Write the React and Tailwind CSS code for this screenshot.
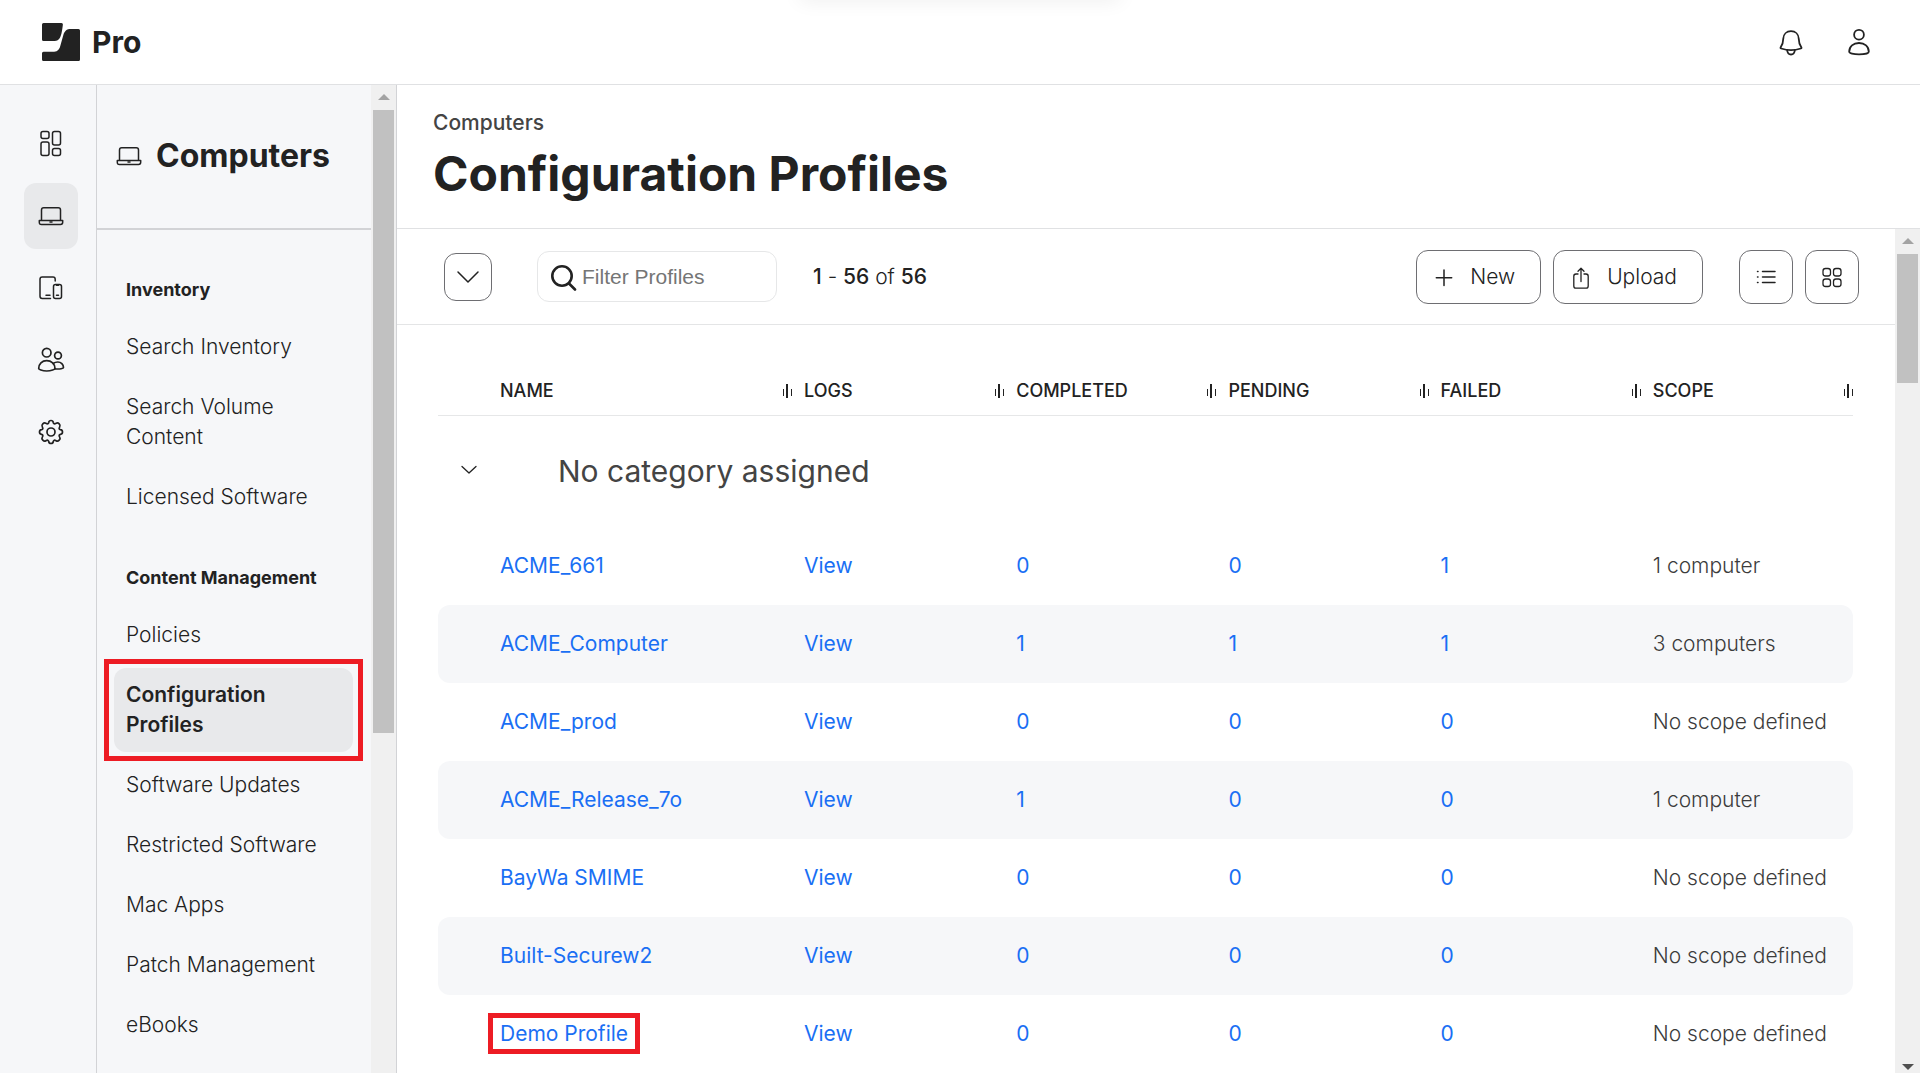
const navGroups = [
  {
    title: "Inventory",
    items: ["Search Inventory", "Search Volume Content", "Licensed Software"],
  },
  {
    title: "Content Management",
    items: [
      "Policies",
      "Configuration Profiles",
      "Software Updates",
      "Restricted Software",
      "Mac Apps",
      "Patch Management",
      "eBooks",
    ],
  },
];

const columns = ["Name", "Logs", "Completed", "Pending", "Failed", "Scope"];

const profiles = [
  { name: "ACME_661", completed: 0, pending: 0, failed: 1, scope: "1 computer" },
  { name: "ACME_Computer", completed: 1, pending: 1, failed: 1, scope: "3 computers" },
  { name: "ACME_prod", completed: 0, pending: 0, failed: 0, scope: "No scope defined" },
  { name: "ACME_Release_7o", completed: 1, pending: 0, failed: 0, scope: "1 computer" },
  { name: "BayWa SMIME", completed: 0, pending: 0, failed: 0, scope: "No scope defined" },
  { name: "Built-Securew2", completed: 0, pending: 0, failed: 0, scope: "No scope defined" },
  { name: "Demo Profile", completed: 0, pending: 0, failed: 0, scope: "No scope defined" },
];

const Icon = ({ size = 28, width = 1.5, children }) => (
  <svg
    width={size}
    height={size}
    viewBox={`0 0 ${size} ${size}`}
    fill="none"
    stroke="currentColor"
    strokeWidth={width}
    strokeLinecap="round"
    strokeLinejoin="round"
    className="shrink-0"
    aria-hidden="true"
  >
    {children}
  </svg>
);

const Logo = () => (
  <svg width="38" height="38" viewBox="0 0 38 38" fill="#222222" aria-hidden="true">
    <path d="M1.5 0H19.5Q21 0 20.9 1.5C20.3 6 19.9 10 18.6 13.2C17.2 16.7 15.5 18 11.5 18H1.5Q0 18 0 16.5V1.5Q0 0 1.5 0Z" />
    <path d="M29 6H36.5Q38 6 38 7.5V36.5Q38 38 36.5 38H1.5Q0 38 0 36.5V30.3Q0 28.8 1.5 28.8H10.5C15 28.8 17 27.3 18.2 23.2L21.2 12.5C22.6 7.8 24.5 6 29 6Z" />
  </svg>
);

const DashboardIcon = () => (
  <Icon>
    <rect x="4" y="1.5" width="8" height="7" rx="2" />
    <rect x="4" y="12" width="8" height="13.5" rx="2" />
    <rect x="15.5" y="1.5" width="8" height="13.5" rx="2" />
    <rect x="15.5" y="18.5" width="8" height="7" rx="2" />
  </Icon>
);

const LaptopIcon = () => (
  <Icon>
    <path d="M4.5 18V8Q4.5 5.8 6.7 5.8H21.3Q23.5 5.8 23.5 8V18" />
    <path d="M2.3 18.5H25.7V20.3Q25.7 22.5 23.5 22.5H4.5Q2.3 22.5 2.3 20.3Z" />
    <path d="M13 20H15" />
  </Icon>
);

const DevicesIcon = () => (
  <Icon>
    <path d="M13.5 24.5H5.2Q3 24.5 3 22.3V5.2Q3 3 5.2 3H16Q18.2 3 18.2 5.2V7" />
    <rect x="16.5" y="10.5" width="8" height="14" rx="2" />
    <path d="M9 21.2H13M19.5 21.2H21.5M19.5 11.2H21.5" />
  </Icon>
);

const PeopleIcon = () => (
  <Icon width={1.7}>
    <circle cx="9.7" cy="6.7" r="4.3" />
    <circle cx="21" cy="9.5" r="3.4" />
    <path d="M1.7 22.5C1.7 18 5 14.7 9.7 14.7S18 18 18 22.5C18 23.2 14.5 25 9.7 25S1.7 23.2 1.7 22.5Z" />
    <path d="M16.2 17.5C17.5 16.5 19 16 20.8 16C24 16 26.5 18.5 26.5 21.6C26.5 22.4 23 23.4 18 22.8" />
  </Icon>
);

// eight teeth round the hub
const GearIcon = () => (
  <Icon width={1.7}>
    <circle cx="14" cy="14" r="4" />
    <path d="M11.7 4.5Q12 2.5 14 2.5T16.3 4.5Q16.7 6.7 19.1 5.3Q20.7 4.3 22.2 5.8T22.7 8.9Q21.3 11.3 23.5 11.7Q25.5 12 25.5 14T23.5 16.3Q21.3 16.7 22.7 19.1Q23.7 20.7 22.2 22.2T19.1 22.7Q16.7 21.3 16.3 23.5Q16 25.5 14 25.5T11.7 23.5Q11.3 21.3 8.9 22.7Q7.3 23.7 5.8 22.2T5.3 19.1Q6.7 16.7 4.5 16.3Q2.5 16 2.5 14T4.5 11.7Q6.7 11.3 5.3 8.9Q4.3 7.3 5.8 5.8T8.9 5.3Q11.3 6.7 11.7 4.5Z" />
  </Icon>
);

const BellIcon = () => (
  <Icon width={1.8}>
    <path d="M14 3.2C9.5 3.2 6.5 6.3 6.3 10.5C6.2 14.5 5.8 16.2 3.7 19.3C3.3 20 3.5 20.3 4.2 20.5C10 22.4 18 22.4 23.8 20.5C24.5 20.3 24.7 20 24.3 19.3C22.2 16.2 21.8 14.5 21.7 10.5C21.5 6.3 18.5 3.2 14 3.2Z" />
    <path d="M10.2 22.2C10.4 25 11.8 26.5 14 26.5S17.6 25 17.8 22.2" />
  </Icon>
);

const UserIcon = () => (
  <Icon width={1.8}>
    <circle cx="14" cy="6.7" r="4.9" />
    <path d="M4.2 23.7C4.2 18.5 8.3 15 14 15S23.8 18.5 23.8 23.7C23.8 25.2 19.5 26.4 14 26.4S4.2 25.2 4.2 23.7Z" />
  </Icon>
);

const SortIcon = () => (
  <svg width="9" height="15" viewBox="0 0 9 15" fill="#222222" aria-hidden="true">
    <path d="M0 5H1V12H0ZM3 0H5V14H3ZM8 5H9V12H8Z" />
  </svg>
);

const railItems = [
  { label: "Dashboard", icon: DashboardIcon },
  { label: "Computers", icon: LaptopIcon, active: true },
  { label: "Devices", icon: DevicesIcon },
  { label: "Users", icon: PeopleIcon },
  { label: "Settings", icon: GearIcon },
];

const Rail = () => (
  <nav className="flex w-[97px] shrink-0 flex-col items-center gap-1.5 border-r border-[#d2d3d6] bg-[#f6f7f9] pt-[26px] pl-1.5">
    {railItems.map(({ label, icon: RailIcon, active }) => (
      <a
        key={label}
        href="#"
        aria-label={label}
        className={`flex h-[66px] w-[54px] items-center justify-center rounded-xl ${
          active ? "bg-[#e8e9eb]" : ""
        }`}
      >
        <RailIcon />
      </a>
    ))}
  </nav>
);

const ScrollBar = ({ thumb, end }) => (
  <div className="flex w-[25px] shrink-0 flex-col items-center bg-[#f0f0f0]">
    <svg width="12" height="25" viewBox="0 0 12 25" fill="#a3a3a3" className="shrink-0">
      <path d="M0 15L6 9L12 15Z" />
    </svg>
    <div className={`w-[21px] bg-[#c1c1c1] ${thumb}`} />
    {end && (
      <svg width="12" height="12" viewBox="0 0 12 12" fill="#505050" className="mt-auto shrink-0">
        <path d="M0 3H12L6 9Z" />
      </svg>
    )}
  </div>
);

const SideNav = () => (
  <aside className="flex w-[300px] shrink-0 border-r border-[#d2d3d6] bg-[#f6f7f9]">
    <div className="min-w-0 flex-1 overflow-hidden">
      <div className="flex h-[145px] items-center gap-[13px] border-b-2 border-[#d2d3d6] pb-0.5 pl-[18px]">
        <LaptopIcon />
        <h2 className="text-[32px] leading-10 font-bold">Computers</h2>
      </div>
      <div className="pt-10 pr-[18px] pl-[17px]">
        {navGroups.map((group) => (
          <section key={group.title} className="mb-[31px]">
            <h3 className="px-3 pt-1 pb-[11px] text-lg leading-8 font-bold">{group.title}</h3>
            <ul>
              {group.items.map((item) => {
                const active = item === "Configuration Profiles";
                return (
                  <li key={item} className="relative py-[3px]">
                    <a
                      href="#"
                      className={`block rounded-xl px-3 py-3 text-[21px] leading-[30px] ${
                        active ? "bg-[#e8e9eb] pr-20 font-semibold" : "font-light"
                      }`}
                    >
                      {item}
                    </a>
                    {active && (
                      <span className="pointer-events-none absolute -inset-x-2.5 -inset-y-1.5 border-5 border-[#ed1c24]" />
                    )}
                  </li>
                );
              })}
            </ul>
          </section>
        ))}
      </div>
    </div>
    <ScrollBar thumb="h-[623px]" />
  </aside>
);

const Toolbar = () => (
  <div className="flex h-24 items-center border-b border-[#e4e5e6] pr-9 pl-[47px]">
    <button
      type="button"
      aria-label="Toggle categories"
      className="flex size-12 items-center justify-center rounded-xl border border-[#6e6e72]"
    >
      <Icon>
        <path d="M4 9L14 19L24 9" />
      </Icon>
    </button>
    <label className="ml-[45px] flex h-[51px] w-60 items-center gap-1 rounded-xl border border-[#e6e7e8] pl-3">
      <Icon width={2.6}>
        <circle cx="12" cy="13" r="9.7" />
        <path d="M19 20.500L25 26.500" />
      </Icon>
      <input
        type="text"
        placeholder="Filter Profiles"
        aria-label="Filter Profiles"
        className="w-full min-w-0 bg-transparent font-['Liberation_Sans',sans-serif] text-[21px] outline-none placeholder:text-[#757575]"
      />
    </label>
    <p className="ml-9 text-[21px] font-light">
      <b className="font-medium">1</b> - <b className="font-medium">56</b> of{" "}
      <b className="font-medium">56</b>
    </p>
    <div className="ml-auto flex gap-3 text-[21px] font-light">
      <button
        type="button"
        className="flex h-[54px] items-center gap-3 rounded-xl border border-[#6e6e72] pr-[25px] pl-[13px]"
      >
        <Icon>
          <path d="M14 7V22.500M6.300 14.800H21.700" />
        </Icon>
        New
      </button>
      <button
        type="button"
        className="flex h-[54px] items-center gap-3 rounded-xl border border-[#6e6e72] pr-[25px] pl-[13px]"
      >
        <Icon width={1.3}>
          <path d="M11 11H9Q6.800 11 6.800 13.200V23Q6.800 25.200 9 25.200H19Q21.200 25.200 21.200 23V13.200Q21.200 11 19 11H17" />
          <path d="M14 18.500V5.500M11 8.200L14 5.200L17 8.200" />
        </Icon>
        Upload
      </button>
      <button
        type="button"
        aria-label="List view"
        className="ml-6 flex size-[54px] items-center justify-center rounded-xl border border-[#6e6e72]"
      >
        <Icon>
          <path d="M10.500 8.500H23M10.500 14H23M10.500 19.500H23M5.500 8.500H6M5.500 14H6M5.500 19.500H6" />
        </Icon>
      </button>
      <button
        type="button"
        aria-label="Grid view"
        className="flex size-[54px] items-center justify-center rounded-xl border border-[#6e6e72]"
      >
        <Icon width={1.3}>
          <rect x="5" y="5.5" width="7.5" height="7.5" rx="2.5" />
          <rect x="15.500" y="5.5" width="7.5" height="7.5" rx="2.5" />
          <rect x="5" y="16" width="7.5" height="7.5" rx="2.5" />
          <rect x="15.500" y="16" width="7.5" height="7.5" rx="2.5" />
        </Icon>
      </button>
    </div>
  </div>
);

const ProfileRow = ({ profile }) => (
  <tr className="group h-[78px]">
    <td className="rounded-l-xl group-odd:bg-[#f6f7f9]" />
    <td className="pl-3 group-odd:bg-[#f6f7f9]">
      <a href="#" className="relative text-[#1a6ff4]">
        {profile.name}
        {profile.name === "Demo Profile" && (
          <span className="pointer-events-none absolute -inset-x-3 -inset-y-2 border-5 border-[#ed1c24]" />
        )}
      </a>
    </td>
    {["View", profile.completed, profile.pending, profile.failed].map((value, i) => (
      <td key={i} className="pl-3 group-odd:bg-[#f6f7f9]">
        <a href="#" className="text-[#1a6ff4]">
          {value}
        </a>
      </td>
    ))}
    <td className="rounded-r-xl pl-3 font-light text-[#3c3c3c] group-odd:bg-[#f6f7f9]">
      {profile.scope}
    </td>
  </tr>
);

const ProfilesTable = () => (
  <div className="pt-12 pr-[42px] pl-[41px]">
    <table className="w-full table-fixed border-separate border-spacing-0 text-left text-[21px]">
      <colgroup>
        <col className="w-[50px]" />
        <col className="w-[304px]" />
        <col span={5} />
      </colgroup>
      <thead>
        <tr className="h-[43px] text-lg">
          <th className="border-b border-[#e6e7e8]" />
          {columns.map((column) => (
            <th key={column} className="border-b border-[#e6e7e8] pb-1.5 pl-3 font-medium uppercase">
              <div className="flex items-center justify-between">
                {column}
                <SortIcon />
              </div>
            </th>
          ))}
        </tr>
      </thead>
      <tbody>
        <tr className="h-[111px]">
          <td className="pb-1 pl-[17px]">
            <button type="button" aria-label="Collapse category" className="flex">
              <Icon width={1.3}>
                <path d="M7 10.500L14 17L21 10.500" />
              </Icon>
            </button>
          </td>
          <td colSpan={6} className="pb-0.5 pl-[70px] text-3xl text-[#444444]">
            No category assigned
          </td>
        </tr>
        {profiles.map((profile) => (
          <ProfileRow key={profile.name} profile={profile} />
        ))}
      </tbody>
    </table>
  </div>
);

export default function App() {
  return (
    <div className="flex h-screen flex-col overflow-hidden bg-white font-['Inter',sans-serif] text-[#222222]">
      <header className="relative flex h-[85px] shrink-0 items-center overflow-hidden border-b border-[#e0e1e3] pr-[47px] pl-[42px]">
        {/* drop shadow of the panel tucked above the header */}
        <span className="absolute bottom-full left-1/2 h-4 w-80 -translate-x-1/2 shadow-[0_0_20px_rgba(0,0,0,0.08)]" />
        <Logo />
        <span className="ml-3 text-3xl font-bold">Pro</span>
        <div className="ml-auto flex gap-10">
          <button type="button" aria-label="Notifications">
            <BellIcon />
          </button>
          <button type="button" aria-label="Account">
            <UserIcon />
          </button>
        </div>
      </header>
      <div className="flex min-h-0 flex-1">
        <Rail />
        <SideNav />
        <main className="flex min-w-0 flex-1 flex-col">
          <div className="h-36 shrink-0 border-b border-[#e0e1e3] pt-6 pl-9">
            <p className="text-[21px] leading-7 font-medium text-[#444444]">Computers</p>
            <h1 className="mt-2 text-5xl leading-[58px] font-bold">Configuration Profiles</h1>
          </div>
          <div className="flex min-h-0 flex-1">
            <div className="min-w-0 flex-1 overflow-hidden">
              <Toolbar />
              <ProfilesTable />
            </div>
            <ScrollBar thumb="h-[129px]" end />
          </div>
        </main>
      </div>
    </div>
  );
}
